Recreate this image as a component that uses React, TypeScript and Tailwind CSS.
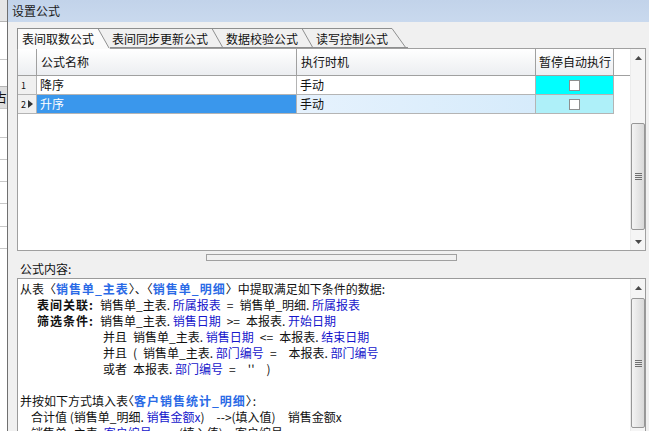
import React from 'react';

// half-width space, like the 6px space of the original dialog font
const E = '\u2002';

const ArrowUp = () => (
  <svg width="7" height="4" viewBox="0 0 7 4">
    <path d="M0 4 L3.5 0 L7 4 Z" fill="#4a4a4a" />
  </svg>
);

const ArrowDown = () => (
  <svg width="7" height="4" viewBox="0 0 7 4">
    <path d="M0 0 L3.5 4 L7 0 Z" fill="#4a4a4a" />
  </svg>
);

const Grip = () => (
  <div className="flex flex-col gap-[1px]">
    <div className="w-[7px] h-[1px] bg-[#707070]" />
    <div className="w-[7px] h-[1px] bg-[#707070]" />
    <div className="w-[7px] h-[1px] bg-[#707070]" />
    <div className="w-[7px] h-[1px] bg-[#707070]" />
  </div>
);

// tab with a slanted right edge
const Tab = ({ label, active, first, last }: { label: string; active?: boolean; first?: boolean; last?: boolean }) => (
  <div className={`flex h-[20px] ${active ? 'relative z-10 -mb-[1px] h-[21px]' : ''}`}>
    <div
      className={`h-full leading-[19px] pr-[4px] border-t border-[#8e8f8f] ${first ? 'border-l pl-[4px]' : 'pl-[2px]'} ${
        active ? 'bg-[#fbfbfb]' : 'bg-[#f0f0f0] border-b'
      }`}
    >
      {label}
    </div>
    <svg width={last ? 16 : 12} height={active ? 21 : 20} className="block shrink-0">
      {active ? <path d="M0 0.5 L12 21 L0 21 Z" fill="#fbfbfb" /> : null}
      {!last ? <line x1="0" y1="0.5" x2="12" y2="0.5" stroke="#8e8f8f" /> : null}
      {!active ? <line x1="0" y1="19.5" x2={last ? 16 : 12} y2="19.5" stroke="#8e8f8f" /> : null}
      <line x1="0" y1="0.5" x2={last ? 14 : 11} y2="20" stroke="#8e8f8f" />
    </svg>
  </div>
);

const Checkbox = () => <div className="w-[11px] h-[11px] bg-white border border-[#8e8f8f]" />;

const B = ({ children }: { children: React.ReactNode }) => (
  <span className="font-bold tracking-[1px] text-[#2a6ae6]">{children}</span>
);
const F = ({ children }: { children: React.ReactNode }) => <span className="text-[#1616cc]">{children}</span>;
const K = ({ children }: { children: React.ReactNode }) => <span className="font-bold tracking-[1px]">{children}</span>;

export default function App() {
  return (
    <div className="w-[649px] h-[431px] overflow-hidden flex bg-[#f0f0f0] text-[12px] text-[#111] font-['Noto_Sans_CJK_SC','Noto_Sans',sans-serif]">
      {/* window behind */}
      <div className="w-[8px] shrink-0 flex flex-col border-r border-[#707070] bg-white overflow-hidden">
        <div className="h-[22px] bg-[#e6e6e6] border-b border-[#b5b5b5]" />
        <div className="h-[38px] border-b border-[#c8c8c8]" />
        <div className="h-[27px] border-b border-[#b5b5b5]" />
        <div className="h-[22px] bg-[#dedede] border-b border-[#c8c8c8] leading-[20px] text-[13px] -indent-[6px] whitespace-nowrap">占</div>
        <div className="h-[29px] border-b border-[#c8c8c8]" />
        <div className="h-[22px] border-b border-[#c8c8c8]" />
        <div className="h-[22px] border-b border-[#c8c8c8]" />
        <div className="h-[22px] border-b border-[#c8c8c8]" />
        <div className="h-[23px] border-b border-[#c8c8c8]" />
        <div className="h-[22px] border-b border-[#c8c8c8]" />
      </div>

      {/* dialog */}
      <div className="flex-1 flex flex-col">
        <div className="h-[22px] shrink-0 bg-linear-to-b from-[#c2d3ea] to-[#c9d9ee] pl-[4px] leading-[21px] text-[#1b1b1b]">
          设置公式
        </div>

        <div className="flex-1 flex flex-col pl-[9px] pr-[3px] pt-[6px]">
          {/* tabs */}
          <div className="flex items-end">
            <Tab label="表间取数公式" active first />
            <Tab label="表间同步更新公式" />
            <Tab label="数据校验公式" />
            <Tab label="读写控制公式" last />
          </div>

          {/* grid */}
          <div className="h-[203px] flex border border-[#a0a0a0] bg-white">
            <div className="flex-1 flex flex-col">
              <div className="flex h-[27px] border-b border-[#a0a0a0]">
                <div className="w-[19px] bg-linear-to-b from-white to-[#eceef1] border-r border-[#a0a0a0]" />
                <div className="w-[260px] pl-[4px] leading-[26px] bg-linear-to-b from-white to-[#eceef1] border-r border-[#a0a0a0]">公式名称</div>
                <div className="w-[239px] pl-[4px] leading-[26px] bg-linear-to-b from-white to-[#eceef1] border-r border-[#a0a0a0]">执行时机</div>
                <div className="w-[78px] pl-[3px] leading-[26px] bg-linear-to-b from-white to-[#eceef1] border-r border-[#a0a0a0]">暂停自动执行</div>
              </div>
              <div className="flex h-[19px]">
                <div className="w-[19px] bg-[#f0f0f0] border-r border-b border-[#b4b4b4] pl-[3px] text-[9px] leading-[19px]">1</div>
                <div className="w-[260px] pl-[3px] leading-[18px] border-r border-b border-[#b4b4b4]">降序</div>
                <div className="w-[239px] pl-[3px] leading-[18px] border-r border-b border-[#b4b4b4]">手动</div>
                <div className="w-[78px] bg-[#00ffff] border-r border-b border-[#b4b4b4] flex items-center justify-center">
                  <Checkbox />
                </div>
              </div>
              <div className="flex h-[19px]">
                <div className="w-[19px] bg-[#f0f0f0] border-r border-b border-[#b4b4b4] pl-[3px] flex items-center gap-[2px]">
                  <span className="text-[9px] leading-[19px]">2</span>
                  <svg width="5" height="8" viewBox="0 0 5 8">
                    <path d="M0 0 L5 4 L0 8 Z" fill="#333" />
                  </svg>
                </div>
                <div className="w-[260px] pl-[3px] leading-[18px] bg-[#3a97ec] text-white border-r border-b border-[#b4b4b4]">升序</div>
                <div className="w-[239px] pl-[3px] leading-[18px] bg-linear-to-r from-[#e6f2fd] to-[#d6ebfb] border-r border-b border-[#b4b4b4]">手动</div>
                <div className="w-[78px] bg-[#aef0f9] border-r border-b border-[#b4b4b4] flex items-center justify-center">
                  <Checkbox />
                </div>
              </div>
            </div>
            {/* vertical scrollbar */}
            <div className="w-[15px] flex flex-col bg-[#f5f5f5] border-l border-[#ececec]">
              <div className="h-[17px] flex items-center justify-center">
                <ArrowUp />
              </div>
              <div className="mt-[57px] h-[107px] rounded-[2px] border border-[#979797] bg-linear-to-r from-[#f4f4f4] to-[#d9d9d9] flex items-center justify-center">
                <Grip />
              </div>
              <div className="flex-1" />
              <div className="h-[17px] flex items-center justify-center">
                <ArrowDown />
              </div>
            </div>
          </div>

          {/* splitter */}
          <div className="mt-[3px] ml-[189px] w-[251px] h-[7px] border border-[#a0a0a0]" />
          <div className="h-[16px] leading-[16px] pl-[3px]">公式内容:</div>

          {/* formula text */}
          <div className="mt-[1px] h-[200px] flex border border-[#9a9a9a] bg-white">
            <div className="flex-1 pl-[2px] pt-[2px] leading-[16px] whitespace-pre">
              <div>
                从表〈<B>销售单_主表</B>〉、〈<B>销售单_明细</B>〉中提取满足如下条件的数据:
              </div>
              <div className="pl-[17px]">
                <K>表间关联:</K>{E}销售单_主表. <F>所属报表</F>{E}={E}销售单_明细. <F>所属报表</F>
              </div>
              <div className="pl-[17px]">
                <K>筛选条件:</K>{E}销售单_主表. <F>销售日期</F>{E}&gt;={E}本报表. <F>开始日期</F>
              </div>
              <div className="pl-[83px]">
                并且{E}销售单_主表. <F>销售日期</F>{E}&lt;={E}本报表. <F>结束日期</F>
              </div>
              <div className="pl-[83px]">
                并且{E}({E}销售单_主表. <F>部门编号</F>{E}={E}{E}本报表. <F>部门编号</F>
              </div>
              <div className="pl-[83px]">
                或者{E}本报表. <F>部门编号</F>{E}={E}{E}''{E}{E})
              </div>
              <div className="h-[16px]" />
              <div>
                并按如下方式填入表<span className="-ml-[6px]">〈</span>
                <B>客户销售统计_明细</B>
                <span className="-mr-[5px]">〉</span>:
              </div>
              <div className="pl-[11px]">
                合计值 (销售单_明细. <F>销售金额x</F>){E}{E}--&gt;(填入值){E}{E}销售金额x
              </div>
              <div className="pl-[11px]">
                销售单_主表. <F>客户编号</F>{E}{E}--&gt;(填入值){E}{E}客户编号
              </div>
            </div>
            <div className="w-[15px] flex flex-col bg-[#f5f5f5] border-l border-[#ececec]">
              <div className="h-[17px] flex items-center justify-center">
                <ArrowUp />
              </div>
              <div className="mt-[2px] h-[130px] rounded-[2px] border border-[#979797] bg-linear-to-r from-[#f4f4f4] to-[#d9d9d9] flex items-center justify-center">
                <Grip />
              </div>
            </div>
          </div>
        </div>
      </div>
    </div>
  );
}
